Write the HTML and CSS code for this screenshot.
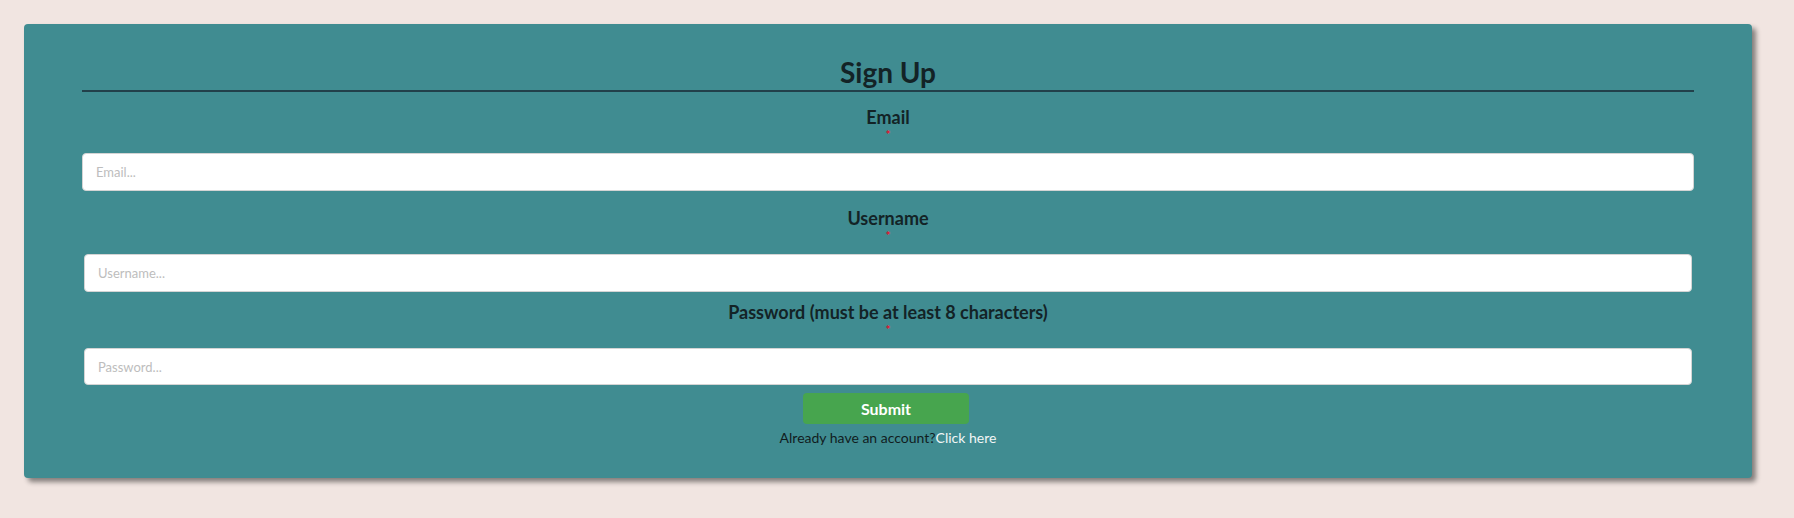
FILE: index.html
```html
<!DOCTYPE html>
<html lang="en">
<head>
<meta charset="utf-8">
<title>Sign Up</title>
<link rel="stylesheet" href="styles.css">
</head>
<body>
<main class="page">
  <form class="card">
    <h1 class="title">Sign Up</h1>
    <div class="field field-email">
      <label class="label" for="email">Email</label>
      <span class="req">*</span>
      <input class="input input-wide" id="email" type="email" placeholder="Email...">
    </div>
    <div class="field">
      <label class="label" for="username">Username</label>
      <span class="req">*</span>
      <input class="input" id="username" type="text" placeholder="Username...">
    </div>
    <div class="field">
      <label class="label" for="password">Password (must be at least 8 characters)</label>
      <span class="req">*</span>
      <input class="input input-short" id="password" type="password" placeholder="Password...">
    </div>
    <button class="submit" type="button">Submit</button>
    <p class="switch">Already have an account?<a class="switch-link" href="#">Click here</a></p>
  </form>
</main>
</body>
</html>
```
FILE: styles.css
```css
html, body {
  margin: 0;
  padding: 0;
}

body {
  background: #f1e5e1;
  font-family: Lato, "Open Sans", sans-serif;
  color: #132326;
}

.page {
  padding: 24px;
}

.card {
  width: 1728px;
  box-sizing: border-box;
  background: #408c91;
  border-radius: 4px;
  box-shadow: 4px 4px 5px rgba(0, 0, 0, 0.45);
  padding: 31px 58px 32px;
  display: flex;
  flex-direction: column;
  align-items: stretch;
}

.title {
  margin: 0;
  font-size: 28px;
  line-height: 34px;
  font-weight: 700;
  text-align: center;
  padding-bottom: 1px;
  border-bottom: 2px solid #22404a;
}

.field {
  display: flex;
  flex-direction: column;
  align-items: stretch;
}

.field-email {
  margin-top: 14px;
  margin-bottom: 7px;
}

.label {
  display: block;
  text-align: center;
  font-size: 18px;
  line-height: 22px;
  font-weight: 700;
  margin-top: 9px;
}

.field-email .label {
  margin-top: 0;
}

.req {
  display: block;
  text-align: center;
  color: #e0102e;
  font-size: 12px;
  font-weight: 700;
  line-height: 10px;
  margin-top: 2px;
  margin-bottom: 13px;
}

.input {
  display: block;
  box-sizing: border-box;
  height: 38px;
  margin: 0 2px;
  padding: 0 13px;
  border: 1px solid #d4d4d4;
  border-radius: 4px;
  background: #fff;
  font-family: Lato, sans-serif;
  font-size: 13px;
  color: #333;
  outline: none;
}

.input-wide {
  margin: 0;
}

.input-short {
  height: 37px;
}

.input::placeholder {
  color: #bdbdbd;
}

.submit {
  align-self: center;
  margin-top: 8px;
  margin-right: 4px;
  width: 166px;
  height: 31px;
  border: none;
  border-radius: 4px;
  background: #47a54e;
  color: #fff;
  font-family: Lato, sans-serif;
  font-size: 16px;
  font-weight: 700;
  cursor: pointer;
}

.switch {
  margin: 5px 0 0;
  text-align: center;
  font-size: 14px;
  line-height: 17px;
  color: #111c1e;
}

.switch-link {
  color: #f2f6f6;
  text-decoration: none;
}
```
